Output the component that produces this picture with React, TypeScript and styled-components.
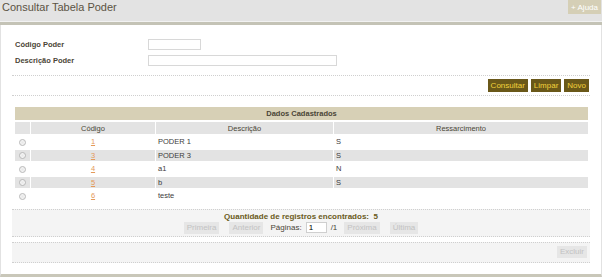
import React from "react";
import styled, { createGlobalStyle } from "styled-components";

const Global = createGlobalStyle`
  html, body { margin: 0; padding: 0; background: #fff; }
  body { font-family: "Liberation Sans", Arial, sans-serif; }
  * { box-sizing: border-box; }
`;

const Page = styled.div`
  width: 602px;
  height: 277px;
  display: flex;
  flex-direction: column;
`;

const Header = styled.div`
  height: 25px;
  background: #e3e3e3;
  display: flex;
  justify-content: space-between;
  align-items: flex-start;
  border-bottom: 3px solid #c4c3b6;
  box-shadow: inset 0 -1px 0 #f2f2f2;
`;

const Title = styled.h1`
  margin: 0;
  padding: 1px 0 0 2px;
  font-size: 11px;
  font-weight: normal;
  color: #5b5343;
`;

const HelpButton = styled.button`
  border: none;
  background: #d5cfb6;
  color: #fff;
  font-family: inherit;
  font-size: 8px;
  height: 14px;
  padding: 0 3px;
  margin-right: 1px;
`;

const Body = styled.div`
  flex: 1;
  border-left: 1px solid #e2e2e2;
  border-right: 1px solid #e2e2e2;
  border-bottom: 3px solid #c9c7b9;
  padding: 14px 11px 0 11px;
  display: flex;
  flex-direction: column;
`;

const Form = styled.div`
  display: grid;
  grid-template-columns: 133px auto;
  row-gap: 5px;
  padding-left: 3px;
  align-items: center;
`;

const Label = styled.label`
  font-size: 7.5px;
  font-weight: bold;
  color: #4a4536;
`;

const TextInput = styled.input<{ $w: number }>`
  width: ${(p) => p.$w}px;
  height: 11px;
  border: 1px solid #d8d8d8;
  padding: 0;
  background: #fff;
`;

const Dotted = styled.div<{ $mt?: number }>`
  border-top: 1px dotted #cfcfcf;
  margin-top: ${(p) => p.$mt ?? 0}px;
`;

const ActionRow = styled.div`
  display: flex;
  justify-content: flex-end;
  gap: 3px;
  padding: 3px 1px 3px 0;
`;

const ActionButton = styled.button`
  border: none;
  background: #6a5819;
  color: #f2d23c;
  font-family: inherit;
  font-size: 8px;
  height: 13px;
  padding: 0 3px;
`;

const Table = styled.table`
  margin: 9px 1px 0 2px;
  border-collapse: separate;
  border-spacing: 1px 2px;
  width: calc(100% - 3px);
  font-size: 7.5px;
`;

const Caption = styled.th`
  background: #d7d0b6;
  color: #4a4536;
  font-weight: bold;
  height: 13px;
  text-align: center;
`;

const HeadCell = styled.th<{ $w?: number }>`
  background: #e3e3e3;
  color: #4a4536;
  font-weight: normal;
  height: 12px;
  text-align: center;
  width: ${(p) => (p.$w ? `${p.$w}px` : "auto")};
`;

const Row = styled.tr<{ $alt: boolean }>`
  td { background: ${(p) => (p.$alt ? "#e3e3e3" : "#fff")}; }
`;

const Cell = styled.td<{ $center?: boolean }>`
  height: 11.5px;
  padding: 0 2px;
  color: #3c3c3c;
  text-align: ${(p) => (p.$center ? "center" : "left")};
`;

const RadioCell = styled.td`
  height: 11.5px;
  padding: 0;
  text-align: center;
`;

const Radio = styled.span`
  display: inline-block;
  width: 7px;
  height: 7px;
  border-radius: 50%;
  border: 1px solid #b8b8b8;
  background: radial-gradient(circle, #e8e8e8 0, #fafafa 100%);
  vertical-align: middle;
`;

const CodeLink = styled.a`
  color: #e49a5a;
  text-decoration: underline;
`;

const Pager = styled.div`
  margin-top: 5px;
  background: #f4f4f4;
  border-top: 1px dotted #cfcfcf;
  border-bottom: 1px dotted #cfcfcf;
  display: flex;
  flex-direction: column;
  align-items: center;
  padding: 2px 0 2px;
`;

const Count = styled.div`
  font-size: 8px;
  font-weight: bold;
  color: #6a5a20;
  line-height: 10px;
`;

const PagerRow = styled.div`
  display: flex;
  align-items: center;
  gap: 4px;
  font-size: 8px;
  color: #4a4536;
`;

const GhostButton = styled.button`
  border: none;
  background: #e6e6e6;
  color: #c2c2c2;
  font-family: inherit;
  font-size: 8px;
  height: 12px;
  padding: 0 3px;
  margin: 0 3px;
`;

const PageInput = styled.input`
  width: 21px;
  height: 11px;
  border: 1px solid #cfcfcf;
  font-size: 8px;
  padding: 0 2px;
  font-family: inherit;
`;

const Footer = styled.div`
  margin-top: 5px;
  background: #f4f4f4;
  border-top: 1px dotted #cfcfcf;
  border-bottom: 1px dotted #cfcfcf;
  display: flex;
  justify-content: flex-end;
  padding: 3px 0 0 0;
  height: 21px;
`;

const rows = [
  { c: "1", d: "PODER 1", r: "S" },
  { c: "3", d: "PODER 3", r: "S" },
  { c: "4", d: "a1", r: "N" },
  { c: "5", d: "b", r: "S" },
  { c: "6", d: "teste", r: "" },
];

export default function App() {
  return (
    <Page>
      <Global />
      <Header>
        <Title>Consultar Tabela Poder</Title>
        <HelpButton>+ Ajuda</HelpButton>
      </Header>
      <Body>
        <Form>
          <Label>Código Poder</Label>
          <TextInput $w={53} />
          <Label>Descrição Poder</Label>
          <TextInput $w={189} />
        </Form>
        <Dotted $mt={9} />
        <ActionRow>
          <ActionButton>Consultar</ActionButton>
          <ActionButton>Limpar</ActionButton>
          <ActionButton>Novo</ActionButton>
        </ActionRow>
        <Dotted />
        <Table>
          <thead>
            <tr>
              <Caption colSpan={4}>Dados Cadastrados</Caption>
            </tr>
            <tr>
              <HeadCell $w={15} />
              <HeadCell $w={124}>Código</HeadCell>
              <HeadCell $w={177}>Descrição</HeadCell>
              <HeadCell>Ressarcimento</HeadCell>
            </tr>
          </thead>
          <tbody>
            {rows.map((r, i) => (
              <Row key={r.c} $alt={i % 2 === 1}>
                <RadioCell>
                  <Radio />
                </RadioCell>
                <Cell $center>
                  <CodeLink>{r.c}</CodeLink>
                </Cell>
                <Cell>{r.d}</Cell>
                <Cell>{r.r}</Cell>
              </Row>
            ))}
          </tbody>
        </Table>
        <Pager>
          <Count>Quantidade de registros encontrados:&nbsp;&nbsp;5</Count>
          <PagerRow>
            <GhostButton>Primeira</GhostButton>
            <GhostButton>Anterior</GhostButton>
            <span>Páginas:</span>
            <PageInput defaultValue="1" />
            <span>/1</span>
            <GhostButton>Próxima</GhostButton>
            <GhostButton>Última</GhostButton>
          </PagerRow>
        </Pager>
        <Footer>
          <GhostButton>Excluir</GhostButton>
        </Footer>
      </Body>
    </Page>
  );
}
